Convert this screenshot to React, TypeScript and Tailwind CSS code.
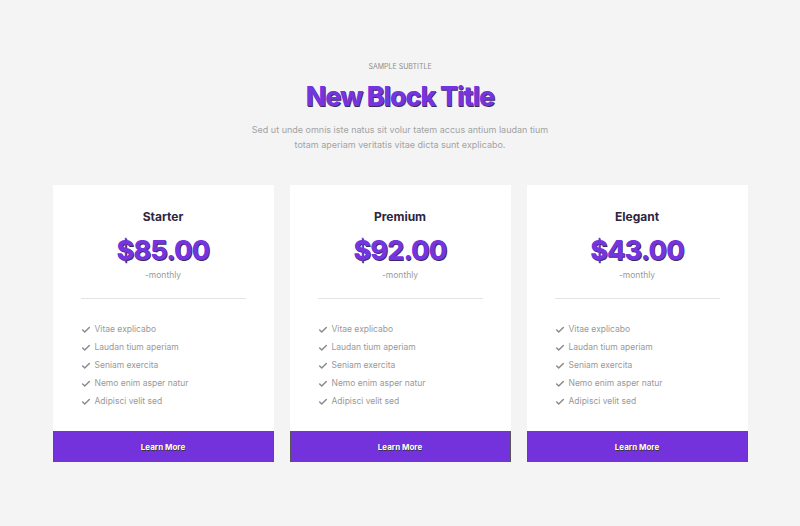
import { Check } from 'lucide-react';

const plans = [
  { name: 'Starter', price: '$85.00' },
  { name: 'Premium', price: '$92.00' },
  { name: 'Elegant', price: '$43.00' },
];

const features = [
  'Vitae explicabo',
  'Laudan tium aperiam',
  'Seniam exercita',
  'Nemo enim asper natur',
  'Adipisci velit sed',
];

function PlanCard({ name, price }: { name: string; price: string }) {
  return (
    <div className="flex flex-col bg-white">
      <div className="flex flex-col items-center pt-[23px]">
        <h3 className="text-[12px] font-bold leading-[18px] text-[#2c2640]">{name}</h3>
        <div className="mt-[8px] text-[27px] font-extrabold leading-[34px] tracking-[-1px] text-[#7434de] [text-shadow:0.6px_0.6px_0_#3a2a60]">
          {price}
        </div>
        <div className="mt-[1px] text-[8.5px] leading-[12px] text-[#9a9a9a]">-monthly</div>
      </div>
      <div className="mx-[28px] mt-[17px] h-px bg-[#e4e4e4]" />
      <ul className="flex flex-col gap-[5px] px-[28px] pb-[23px] pt-[24px]">
        {features.map((f) => (
          <li key={f} className="flex h-[13px] items-center gap-[4px] text-[8.5px] text-[#999]">
            <Check className="h-[10px] w-[10px] text-[#8a8a8a]" strokeWidth={3.5} />
            <span>{f}</span>
          </li>
        ))}
      </ul>
      <button className="h-[31px] border-x border-[#555] bg-[#7432dd] text-[8px] font-bold text-white [text-shadow:0.6px_0.6px_0_#333]">
        Learn More
      </button>
    </div>
  );
}

export default function App() {
  return (
    <div className="min-h-[526px] bg-[#f4f4f4] font-['Inter','Liberation_Sans',sans-serif]">
      <div className="flex flex-col items-center pt-[62px]">
        <div className="text-[7px] uppercase leading-[10px] text-[#8d8d8d]">Sample Subtitle</div>
        <h1 className="mt-[6px] text-[27px] font-extrabold leading-[38px] tracking-[-1.2px] text-[#7434de] [text-shadow:0.6px_0.6px_0_#3a2a60]">
          New Block Title
        </h1>
        <p className="mt-[6px] w-[310px] text-center text-[9px] leading-[15px] text-[#a3a3a3]">
          Sed ut unde omnis iste natus sit volur tatem accus antium laudan tium totam aperiam veritatis vitae dicta sunt explicabo.
        </p>
      </div>
      <div className="mx-auto mt-[33px] grid w-[695px] grid-cols-3 gap-[16px]">
        {plans.map((p) => (
          <PlanCard key={p.name} {...p} />
        ))}
      </div>
    </div>
  );
}
